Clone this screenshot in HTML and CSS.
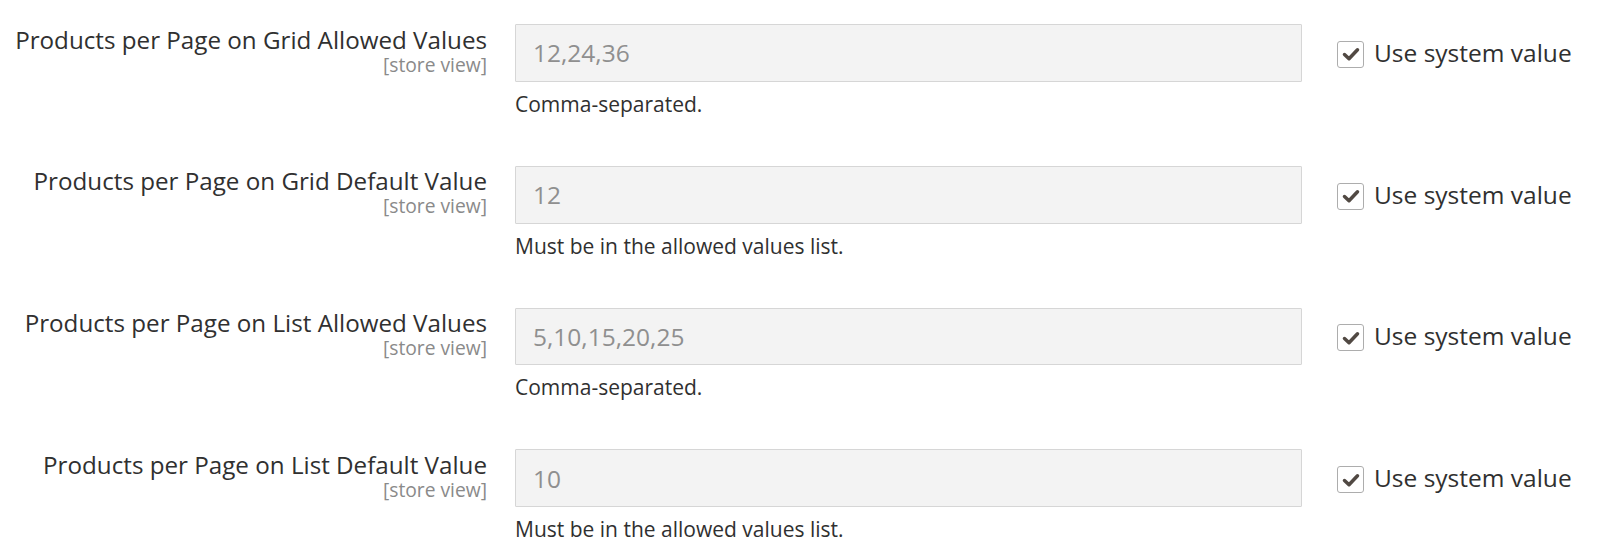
FILE: index.html
```html
<!DOCTYPE html>
<html lang="en">
<head>
    <meta charset="UTF-8">
    <meta name="viewport" content="width=device-width, initial-scale=1.0">
    <title>Catalog Storefront</title>
    <link rel="stylesheet" href="styles.css">
</head>
<body>

<div class="fieldset">
    <div class="row">
        <div class="label">
            <span>Products per Page on Grid Allowed Values</span>
            <span class="scope">[store view]</span>
        </div>
        <div class="control">
            <input type="text" value="12,24,36" disabled>
            <p class="note">Comma-separated.</p>
        </div>
        <label class="use-default">
            <span class="check"><svg viewBox="0 0 16 16"><path d="M2.8 8.4 6.4 11.8 13.2 4.6" fill="none" stroke="#514943" stroke-width="2.8" stroke-linecap="round" stroke-linejoin="round"/></svg></span>
            Use system value
        </label>
    </div>

    <div class="row">
        <div class="label">
            <span>Products per Page on Grid Default Value</span>
            <span class="scope">[store view]</span>
        </div>
        <div class="control">
            <input type="text" value="12" disabled>
            <p class="note">Must be in the allowed values list.</p>
        </div>
        <label class="use-default">
            <span class="check"><svg viewBox="0 0 16 16"><path d="M2.8 8.4 6.4 11.8 13.2 4.6" fill="none" stroke="#514943" stroke-width="2.8" stroke-linecap="round" stroke-linejoin="round"/></svg></span>
            Use system value
        </label>
    </div>

    <div class="row">
        <div class="label">
            <span>Products per Page on List Allowed Values</span>
            <span class="scope">[store view]</span>
        </div>
        <div class="control">
            <input type="text" value="5,10,15,20,25" disabled>
            <p class="note">Comma-separated.</p>
        </div>
        <label class="use-default">
            <span class="check"><svg viewBox="0 0 16 16"><path d="M2.8 8.4 6.4 11.8 13.2 4.6" fill="none" stroke="#514943" stroke-width="2.8" stroke-linecap="round" stroke-linejoin="round"/></svg></span>
            Use system value
        </label>
    </div>

    <div class="row">
        <div class="label">
            <span>Products per Page on List Default Value</span>
            <span class="scope">[store view]</span>
        </div>
        <div class="control">
            <input type="text" value="10" disabled>
            <p class="note">Must be in the allowed values list.</p>
        </div>
        <label class="use-default">
            <span class="check"><svg viewBox="0 0 16 16"><path d="M2.8 8.4 6.4 11.8 13.2 4.6" fill="none" stroke="#514943" stroke-width="2.8" stroke-linecap="round" stroke-linejoin="round"/></svg></span>
            Use system value
        </label>
    </div>
</div>

</body>
</html>
```

FILE: styles.css
```css
body {
    font-family: "Open Sans", "Liberation Sans", sans-serif;
    background-color: #fff;
    color: #303030;
    margin: 0;
    padding: 0;
}
.fieldset {
    padding-top: 24px;
}
.row {
    display: flex;
    align-items: flex-start;
    margin-bottom: 45.5px;
}
.row:last-child {
    margin-bottom: 0;
}
.label {
    width: 487px;
    padding-right: 28px;
    padding-top: 1.7px;
    text-align: right;
    font-size: 24.2px;
    line-height: 1.15;
    flex-shrink: 0;
}
.label span {
    display: block;
}
.label .scope {
    font-size: 19.25px;
    line-height: 1.1;
    color: #8a8a8a;
}
.control {
    width: 787px;
    flex-shrink: 0;
}
.control input {
    display: block;
    width: 100%;
    height: 57.75px;
    box-sizing: border-box;
    margin: 0;
    padding: 0 17px;
    font-family: inherit;
    font-size: 24.5px;
    color: #8f8f8f;
    background-color: #f3f3f3;
    border: 1px solid #d6d6d6;
    border-radius: 1px;
}
.note {
    margin: 7px 0 0;
    font-size: 21px;
    line-height: 1.5;
}
.use-default {
    display: flex;
    align-items: center;
    gap: 10px;
    height: 57.75px;
    margin-left: 35px;
    font-size: 24.5px;
    line-height: 1.3;
    white-space: nowrap;
}
.check {
    display: flex;
    align-items: center;
    justify-content: center;
    width: 27px;
    height: 27px;
    box-sizing: border-box;
    margin-top: 3px;
    border: 1px solid #adadad;
    border-radius: 3px;
    background-color: #fff;
}
.check svg {
    width: 20px;
    height: 20px;
}
```
